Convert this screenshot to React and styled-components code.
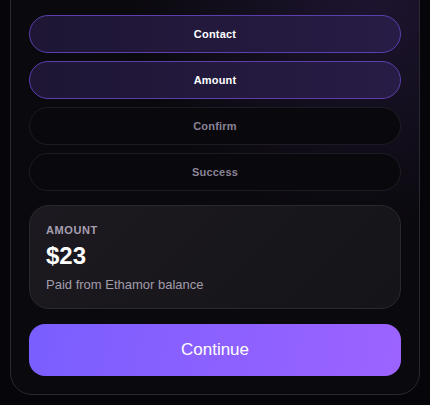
import React from 'react'
import styled, { createGlobalStyle } from 'styled-components'

const GlobalStyle = createGlobalStyle`
  html, body {
    margin: 0;
    padding: 0;
    background: #060509;
    font-family: "Liberation Sans", Arial, sans-serif;
    -webkit-font-smoothing: antialiased;
  }
`

const Page = styled.div`
  padding: 0 10px 10px;
  height: 405px;
  box-sizing: border-box;
  overflow: hidden;
`

// panel top sits above the viewport (the shot is scrolled)
const Panel = styled.div`
  margin-top: -31px;
  padding: 45px 18px 18px;
  border: 1px solid #2a2830;
  border-radius: 22px;
  background:
    radial-gradient(circle at 88% 5%, rgba(80, 50, 140, 0.28), transparent 45%),
    #0a090d;
  display: flex;
  flex-direction: column;
`

const Steps = styled.div`
  display: flex;
  flex-direction: column;
  gap: 8px;
`

const Step = styled.div`
  height: 38px;
  box-sizing: border-box;
  border-radius: 19px;
  display: flex;
  align-items: center;
  justify-content: center;
  font-size: 11px;
  font-weight: 700;
  letter-spacing: 0.2px;
  border: 1px solid ${p => (p.$active ? '#5b3fae' : '#1e1c23')};
  background: ${p => (p.$active ? 'linear-gradient(90deg, #1e1634, #271c45)' : '#09080c')};
  color: ${p => (p.$active ? '#ffffff' : '#8b8496')};
`

const Card = styled.div`
  margin-top: 14px;
  padding: 18px 16px 15px;
  border: 1px solid #2b2930;
  border-radius: 20px;
  background: linear-gradient(135deg, #1c1a20, #151418);
`

const Label = styled.div`
  font-size: 11px;
  line-height: 13px;
  font-weight: 700;
  letter-spacing: 0.6px;
  color: #a69fb0;
`

const Value = styled.div`
  margin-top: 5px;
  font-size: 24px;
  line-height: 28px;
  font-weight: 700;
  color: #ffffff;
`

const Note = styled.div`
  margin-top: 7px;
  font-size: 13px;
  line-height: 16px;
  color: #a39cab;
`

const Button = styled.button`
  margin-top: 15px;
  height: 52px;
  border: none;
  border-radius: 16px;
  background: linear-gradient(100deg, #7a5eff, #9c63ff);
  color: #ffffff;
  font-family: inherit;
  font-size: 17px;
  font-weight: 400;
  cursor: pointer;
`

const steps = [
  { name: 'Contact', active: true },
  { name: 'Amount', active: true },
  { name: 'Confirm', active: false },
  { name: 'Success', active: false },
]

const App = () => {
  return (
    <Page>
      <GlobalStyle />
      <Panel>
        <Steps>
          {steps.map(s => (
            <Step key={s.name} $active={s.active}>{s.name}</Step>
          ))}
        </Steps>

        <Card>
          <Label>AMOUNT</Label>
          <Value>$23</Value>
          <Note>Paid from Ethamor balance</Note>
        </Card>

        <Button>Continue</Button>
      </Panel>
    </Page>
  )
}

export default App
